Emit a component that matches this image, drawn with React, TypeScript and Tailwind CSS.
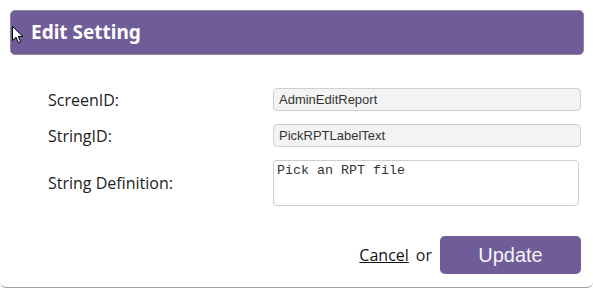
import React from "react";

function Cursor() {
  return (
    <svg
      className="absolute left-[12px] top-[26px]"
      width="12"
      height="18"
      viewBox="0 0 12 18"
    >
      <path
        d="M0.5 0.5 L0.5 14.5 L4 11.2 L6.4 16.8 L8.6 15.8 L6.3 10.4 L11 10.4 Z"
        fill="#fff"
        stroke="#000"
        strokeWidth="1"
      />
    </svg>
  );
}

const labelCls =
  "w-[225px] text-[16px] text-[#222] font-['Open_Sans','Noto_Sans',sans-serif]";
const inputCls =
  "w-[308px] h-[23px] rounded-[4px] border border-[#cfcfcf] bg-[#f3f3f3] pl-[5px] flex items-center text-[13px] text-[#333] font-['Liberation_Sans',Arial,sans-serif]";

export default function App() {
  return (
    <div className="relative w-[593px] h-[288px] bg-white overflow-hidden border-b border-[#a0a0a0] rounded-b-[6px]">
      <div className="pt-[10px] px-[10px]">
        <div className="h-[45px] w-[574px] rounded-[5px] border border-[#8e86a0] bg-[#705c98] flex items-center pl-[20px]">
          <span className="text-white text-[19px] font-bold font-['Noto_Sans','Open_Sans',sans-serif]">
            Edit Setting
          </span>
        </div>
      </div>
      <Cursor />

      <div className="pl-[48px] pt-[33px] flex flex-col gap-[13px]">
        <div className="flex items-center h-[23px]">
          <label className={labelCls}>ScreenID:</label>
          <div className={inputCls}>AdminEditReport</div>
        </div>
        <div className="flex items-center h-[23px]">
          <label className={labelCls}>StringID:</label>
          <div className={inputCls}>PickRPTLabelText</div>
        </div>
        <div className="flex items-center h-[46px]">
          <label className={labelCls}>String Definition:</label>
          <div className="w-[306px] h-[46px] rounded-[4px] border border-[#cfcfcf] bg-white pl-[3px] pt-[2px] text-[13.33px] leading-[15px] text-[#333] font-['Liberation_Mono','Courier_New',monospace]">
            Pick an RPT file
          </div>
        </div>
      </div>

      <div className="flex items-center justify-end pr-[12px] pt-[30px]">
        <a className="underline text-[16px] text-[#111] mr-[7px] font-['Open_Sans','Noto_Sans',sans-serif]">
          Cancel
        </a>
        <span className="text-[16px] text-[#222] mr-[8px] font-['Open_Sans','Noto_Sans',sans-serif]">
          or
        </span>
        <button className="w-[141px] h-[38px] rounded-[5px] bg-[#705c98] text-[#f4f4f4] text-[20px] flex items-center justify-center font-['Liberation_Sans',Arial,sans-serif]">
          Update
        </button>
      </div>
    </div>
  );
}
